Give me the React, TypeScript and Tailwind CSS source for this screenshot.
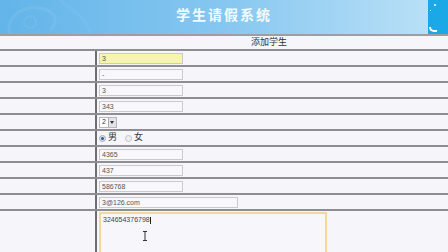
import React from "react";

const font = { fontFamily: '"Liberation Sans", "Noto Sans CJK SC", sans-serif' };

function Row({ children, tall }: { children?: React.ReactNode; tall?: boolean }) {
  return (
    <div className={`flex border-b-2 border-b-[#8e8e92] ${tall ? "h-[60px]" : "h-[16px]"}`}>
      <div className="w-[97px] shrink-0 border-r-2 border-r-[#6e6e72]"></div>
      <div className={`flex-1 flex pl-[2px] ${tall ? "items-start pt-[1px]" : "items-center"}`}>{children}</div>
    </div>
  );
}

function Field({ value, w = "w-[84px]", hl }: { value: string; w?: string; hl?: boolean }) {
  return (
    <div
      className={`${w} h-[11px] border border-[#cbcbcf] ${hl ? "bg-[#f6f4ae]" : "bg-[#f8f7fa]"} text-[7px] leading-[9px] text-[#555] pl-[2px]`}
    >
      {value}
    </div>
  );
}

export default function App() {
  return (
    <div className="w-[448px] h-[252px] overflow-hidden bg-[#f6f5f9] relative" style={font}>
      {/* header */}
      <div className="h-[34px] relative bg-gradient-to-r from-[#62b4e9] via-[#86c7f0] to-[#bde2f7] flex items-center justify-center overflow-hidden">
        <svg className="absolute left-0 top-0" width="110" height="34" viewBox="0 0 110 34">
          <path d="M10 34 C 5 20, 20 5, 40 8 C 55 10, 60 22, 50 30" fill="none" stroke="#7fc2ee" strokeWidth="3" opacity="0.45" />
          <path d="M60 0 C 70 10, 85 14, 90 34" fill="none" stroke="#7fc2ee" strokeWidth="3" opacity="0.35" />
          <circle cx="30" cy="22" r="6" fill="none" stroke="#7fc2ee" strokeWidth="2" opacity="0.35" />
        </svg>
        <span className="text-[#f4fbff] font-semibold text-[14px] tracking-[2px] mt-[-3px]">学生请假系统</span>
        <div className="absolute right-0 top-0 w-[20px] h-[34px] bg-[#1aa8e6]">
          <div className="absolute left-[1px] bottom-[2px] w-[8px] h-[5px] rounded-bl-[6px] border-l-2 border-b-2 border-white"></div>
          <div className="absolute left-[6px] top-[4px] w-[2px] h-[2px] bg-white rounded-full"></div>
          <div className="absolute left-[2px] top-[10px] w-[1px] h-[1px] bg-white"></div>
        </div>
      </div>
      <div className="h-[2px] bg-[#9d9da2]"></div>
      {/* title row */}
      <div className="h-[15px] border-b-2 border-b-[#8e8e92] flex items-center">
        <span className="ml-[251px] text-[9px] text-[#333]">添加学生</span>
      </div>
      <Row><Field value="3" hl /></Row>
      <Row><Field value="-" /></Row>
      <Row><Field value="3" /></Row>
      <Row><Field value="343" /></Row>
      <Row>
        <div className="flex items-center h-[11px] border border-[#b8b8bc] bg-white">
          <span className="text-[7px] text-[#333] px-[2px]">2</span>
          <div className="w-[8px] h-[9px] bg-[#e4e4e8] border-l border-[#aaa] flex items-center justify-center">
            <div className="w-0 h-0 border-l-[2px] border-r-[2px] border-t-[3px] border-l-transparent border-r-transparent border-t-[#333]"></div>
          </div>
        </div>
      </Row>
      <Row>
        <div className="flex items-center text-[9px] text-[#333] gap-[2px]">
          <span className="w-[7px] h-[7px] rounded-full border border-[#aab] bg-[#d8e4f0] flex items-center justify-center">
            <span className="w-[3px] h-[3px] rounded-full bg-[#2a5a8a]"></span>
          </span>
          <span>男</span>
          <span className="w-[7px] h-[7px] rounded-full border border-[#c4c4c8] bg-[#eeeef0] ml-[6px]"></span>
          <span>女</span>
        </div>
      </Row>
      <Row><Field value="4365" /></Row>
      <Row><Field value="437" /></Row>
      <Row><Field value="586768" /></Row>
      <Row><Field value="3@126.com" w="w-[139px]" /></Row>
      <Row tall>
        <div className="w-[228px] h-[56px] border-2 border-[#f0d99a] bg-[#f7f6fa] text-[7px] text-[#444] pl-[2px] pt-[1px] relative">
          324654376798<span className="inline-block w-[1px] h-[7px] bg-[#222] align-middle"></span>
        </div>
      </Row>
      {/* mouse I-beam cursor */}
      <svg className="absolute left-[142px] top-[231px]" width="6" height="10" viewBox="0 0 6 10">
        <path d="M1 0.5 H5 M3 0.5 V9.5 M1 9.5 H5" stroke="#333" strokeWidth="1" fill="none" />
      </svg>
    </div>
  );
}
